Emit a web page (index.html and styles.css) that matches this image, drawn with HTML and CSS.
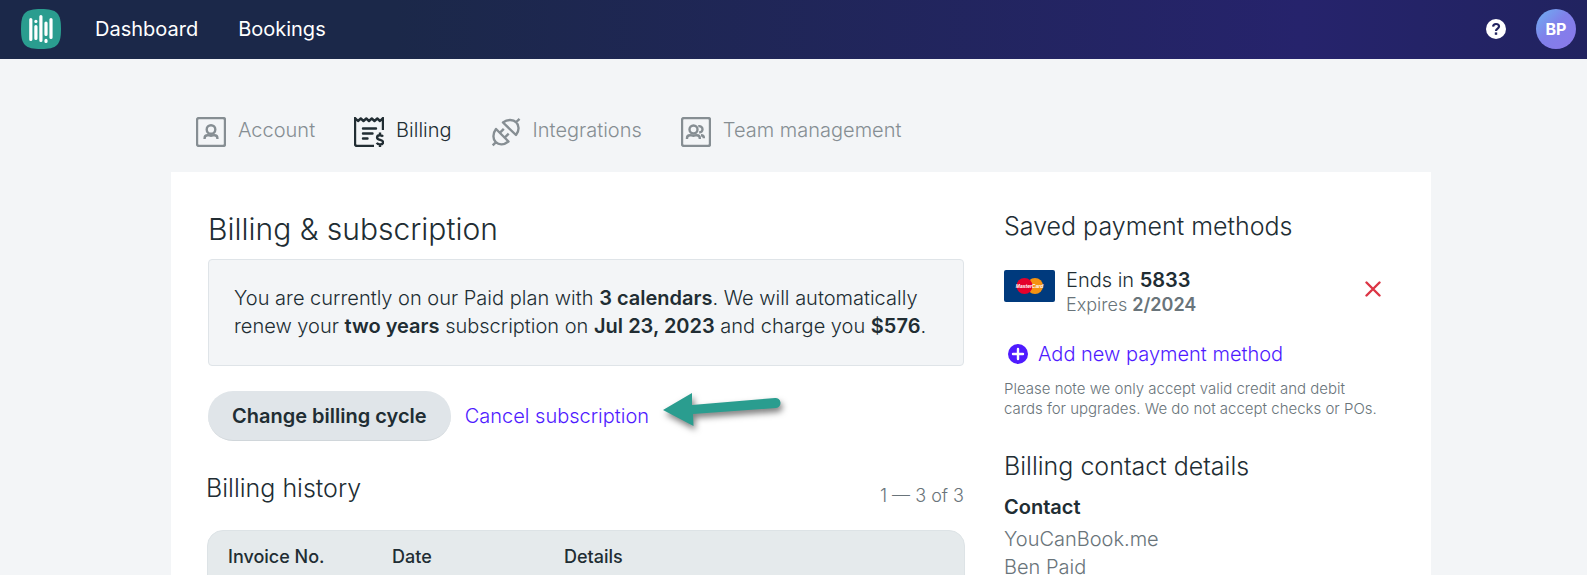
FILE: index.html
```html
<!DOCTYPE html>
<html lang="en">
<head>
    <meta charset="UTF-8">
    <meta name="viewport" content="width=device-width, initial-scale=1.0">
    <title>Billing &amp; subscription</title>
    <link rel="stylesheet" href="styles.css">
</head>
<body>
    <header class="navbar">
        <a class="logo" href="#" aria-label="Home">
            <svg width="40" height="40" viewBox="0 0 40 40">
                <path fill="#2a9d8f" d="M20 0C36 0 40 4 40 20S36 40 20 40 0 36 0 20 4 0 20 0z"/>
                <g stroke="#fff" stroke-width="3.2" stroke-linecap="round">
                    <path d="M9.8 10.5v20M14.9 17.5v12M19.9 7.5v24M25 14v11.5M30 10.5v18"/>
                    <path d="M14.9 12.3v.1M25 31.4v1"/>
                </g>
            </svg>
        </a>
        <nav class="nav-links">
            <a href="#">Dashboard</a>
            <a href="#">Bookings</a>
        </nav>
        <button class="help" type="button" aria-label="Help">
            <svg width="20" height="20" viewBox="0 0 20 20">
                <circle cx="10" cy="10" r="10" fill="#fff"/>
                <path d="M7.1 7.6C7.2 5.9 8.4 5 10 5c1.700 0 3 .9 3 2.500C13 9.700 10 9.500 10 12" fill="none" stroke="#212360" stroke-width="2.200"/>
                <rect x="8.800" y="13.400" width="2.400" height="2.400" fill="#212360"/>
            </svg>
        </button>
        <button class="avatar" type="button">BP</button>
    </header>

    <main class="page">
        <nav class="tabs">
            <a class="tab" href="#">
                <svg class="tab-icon" viewBox="0 0 30 30">
                    <rect x="1" y="1" width="28" height="28" rx="2"/>
                    <circle cx="15" cy="12.500" r="4.300"/>
                    <path d="M8.600 22v-.8c0-2 1.200-3 3-3 1.300 0 1.800.6 3.400.6s2.100-.6 3.400-.6c1.800 0 3 1 3 3v.8"/>
                </svg>
                Account
            </a>
            <a class="tab active" href="#">
                <svg class="tab-icon" viewBox="0 0 30 30">
                    <path d="M20 29H3a2 2 0 0 1-2-2V1l3 3 2.800-2.500L9.500 4l2.800-2.500L15 4l2.800-2.500L20.500 4l2.800-2.500L26 4l3-3v12"/>
                    <path d="M9 11.500h13M9 16.500h9.500M9 21.500h4.500" stroke-linecap="round"/>
                    <path d="M29 19.600c-.6-1-1.500-1.400-3-1.400-1.800 0-2.900.9-2.900 2.200 0 3.200 6 1.700 6 4.800 0 1.400-1.200 2.200-3.100 2.200-1.600 0-2.700-.6-3.200-1.700M26 15.500v3M26 27v3"/>
                </svg>
                Billing
            </a>
            <a class="tab" href="#">
                <svg class="tab-icon" viewBox="0 0 30 30">
                    <path d="M12 5.500L25 18c3.400-4.400 3.300-9.600.3-12.600S16.400 2 12 5.500zM25.300 5l3.200-3.200M5 12L17.500 24.500C13 28 8 28.200 4.800 25.200S1.600 16.500 5 12zM4.700 25.300l-3 3M8.800 15.800l4-4M13.700 20.700l4-4"/>
                </svg>
                Integrations
            </a>
            <a class="tab" href="#">
                <svg class="tab-icon" viewBox="0 0 30 30">
                    <rect x="1" y="1" width="28" height="28" rx="2"/>
                    <circle cx="12.500" cy="12.500" r="4"/>
                    <path d="M6 22v-.8c0-2 1.200-3 3-3 1.300 0 1.800.6 3.400.6s2.100-.6 3.400-.6c1.800 0 3 1 3 3v.8M17.300 9.300c2-.7 4.200.6 4.200 3 0 1.900-1.400 3.100-3.300 3M20 18.300c1.900 0 2.900 1 2.900 3"/>
                </svg>
                Team management
            </a>
        </nav>

        <div class="card">
            <section class="billing">
                <h1>Billing &amp; subscription</h1>
                <p class="plan">You are currently on our Paid plan with <b>3 calendars</b>. We will automatically renew your <b>two years</b> subscription on <b>Jul 23, 2023</b> and charge you <b>$576</b>.</p>
                <div class="actions">
                    <button class="btn" type="button">Change billing cycle</button>
                    <a class="cancel" href="#">Cancel subscription</a>
                    <svg class="arrow" width="130" height="44" viewBox="0 0 130 44">
                        <path fill="#2a9d8f" d="M1 22L30 5v12l83-7a5 5 0 0 1 1 10l-83 6 .5 12z"/>
                    </svg>
                </div>

                <div class="history-head">
                    <h2>Billing history</h2>
                    <span class="count">1 — 3 of 3</span>
                </div>
                <table class="history">
                    <thead>
                        <tr>
                            <th class="col-invoice">Invoice No.</th>
                            <th class="col-date">Date</th>
                            <th>Details</th>
                        </tr>
                    </thead>
                </table>
            </section>

            <aside class="side">
                <h2>Saved payment methods</h2>
                <div class="method">
                    <svg class="mastercard" width="51" height="32" viewBox="0 0 51 32" role="img" aria-label="MasterCard">
                        <rect width="51" height="32" rx="2" fill="#003a7d"/>
                        <circle cx="31" cy="16" r="8" fill="#f59211"/>
                        <circle cx="20.500" cy="16" r="8" fill="#e4002b"/>
                        <text class="mc-text" x="25.500" y="18" text-anchor="middle">MasterCard</text>
                    </svg>
                    <div class="method-info">
                        <div>Ends in <b>5833</b></div>
                        <div class="expires">Expires <b>2/2024</b></div>
                    </div>
                    <button class="remove" type="button" aria-label="Remove card">
                        <svg width="16" height="16" viewBox="0 0 16 16">
                            <path d="M1.500 1.500l13 13M14.500 1.500l-13 13" stroke="#dc3545" stroke-width="2.400" stroke-linecap="round"/>
                        </svg>
                    </button>
                </div>
                <a class="add-method" href="#">
                    <svg width="20" height="20" viewBox="0 0 20 20">
                        <circle cx="10" cy="10" r="10" fill="#4f1bff"/>
                        <path d="M10 5v10M5 10h10" stroke="#fff" stroke-width="2.400" stroke-linecap="round"/>
                    </svg>
                    Add new payment method
                </a>
                <p class="note">Please note we only accept valid credit and debit cards for upgrades. We do not accept checks or POs.</p>

                <h2>Billing contact details</h2>
                <h3>Contact</h3>
                <address>
                    YouCanBook.me<br>
                    Ben Paid
                </address>
            </aside>
        </div>
    </main>
</body>
</html>
```
FILE: styles.css
```css
* {
    box-sizing: border-box;
}
body {
    margin: 0;
    background-color: #f3f5f7;
    color: #212d33;
    font-family: Inter, "Liberation Sans", sans-serif;
    font-size: 20px;
    font-weight: 300;
    line-height: 28px;
}
a {
    color: #4f1bff;
    text-decoration: none;
}
b {
    font-weight: 600;
}
button {
    border: none;
    padding: 0;
    background: none;
    font-family: inherit;
    cursor: pointer;
}
svg {
    display: block;
    flex: none;
}
h1, h2, h3, p {
    margin: 0;
}
h1 {
    font-size: 30px;
    line-height: 38px;
    font-weight: 300;
}
h2 {
    font-size: 25px;
    line-height: 32px;
    font-weight: 300;
}
h3 {
    font-size: 20px;
    line-height: 28px;
    font-weight: 600;
}

/* top bar */
.navbar {
    display: flex;
    align-items: center;
    height: 59px;
    padding: 0 11px 1px 21px;
    background: linear-gradient(90deg, #1b2849 0%, #1b2849 25%, #26236c 82%, #212360 100%);
}
.nav-links {
    display: flex;
    gap: 40px;
    margin-left: 34px;
}
.nav-links a {
    color: #fff;
    font-weight: 400;
}
.help {
    margin-left: auto;
}
.avatar {
    width: 40px;
    height: 40px;
    margin-left: 30px;
    border-radius: 50%;
    background: linear-gradient(135deg, #6db3f2 0%, #8080ea 45%, #8b78ea 100%);
    color: #fff;
    font-size: 16px;
    font-weight: 700;
}

/* page */
.page {
    margin: 0 156px 0 171px;
}
.tabs {
    display: flex;
    gap: 39px;
    padding: 57px 25px 25px;
}
.tab {
    display: flex;
    gap: 12px;
    color: #868e93;
}
.tab.active {
    color: #212d33;
}
.tab-icon {
    width: 30px;
    height: 30px;
    margin-top: 1px;
    fill: none;
    stroke: currentColor;
    stroke-width: 2.4;
    stroke-linejoin: round;
}
.card {
    display: flex;
    gap: 40px;
    padding: 38px 37px;
    background: #fff;
}
.billing {
    flex: 1;
}
.plan {
    margin-top: 11px;
    padding: 24px 25px 25px;
    border: 1px solid #dfe4e8;
    border-radius: 4px;
    background: #f3f5f7;
}
.actions {
    display: flex;
    align-items: center;
    margin-top: 25px;
}
.btn {
    height: 50px;
    padding: 0 24px;
    border-bottom: 1px solid #d0d6da;
    border-radius: 25px;
    background: #e0e5e9;
    color: #212d33;
    font-size: 20px;
    font-weight: 600;
}
.cancel {
    margin-left: 14px;
}
.arrow {
    margin: -12px 0 0 13px;
    filter: drop-shadow(2px 4px 3px rgba(0, 0, 0, 0.5));
}

/* billing history */
.history-head {
    display: flex;
    justify-content: space-between;
    align-items: flex-end;
    margin: 31px 0 20px -2px;
}
.history-head h2 {
    margin-bottom: 6px;
}
.count {
    color: #69747a;
    font-size: 18px;
}
.history {
    width: calc(100% + 2px);
    margin: 0 -1px;
    border: 1px solid #dde3e6;
    border-radius: 16px 16px 0 0;
    border-spacing: 0;
    background: #e5eaec;
}
.history th {
    padding: 12px 20px;
    font-size: 18px;
    font-weight: 500;
    text-align: left;
}
.col-invoice {
    width: 164px;
}
.col-date {
    width: 172px;
}

/* right column */
.side {
    width: 390px;
}
.method {
    display: flex;
    margin-top: 26px;
}
.mastercard {
    margin-top: 2px;
}
.mc-text {
    fill: #fff;
    font-family: "Liberation Sans", sans-serif;
    font-size: 5px;
    font-weight: 700;
    font-style: italic;
}
.method-info {
    margin-left: 11px;
    line-height: 24px;
}
.expires {
    color: #69747a;
    font-size: 18px;
    line-height: 26px;
}
.remove {
    margin: 0 13px 8px auto;
}
.add-method {
    display: flex;
    align-items: center;
    gap: 10px;
    margin: 22px 0 11px 4px;
}
.note {
    margin-bottom: 31px;
    padding-right: 8px;
    color: #69747a;
    font-size: 15px;
    line-height: 20px;
}
.side h3 {
    margin-top: 11px;
}
address {
    margin-top: 4px;
    color: #69747a;
    font-style: normal;
}
```
